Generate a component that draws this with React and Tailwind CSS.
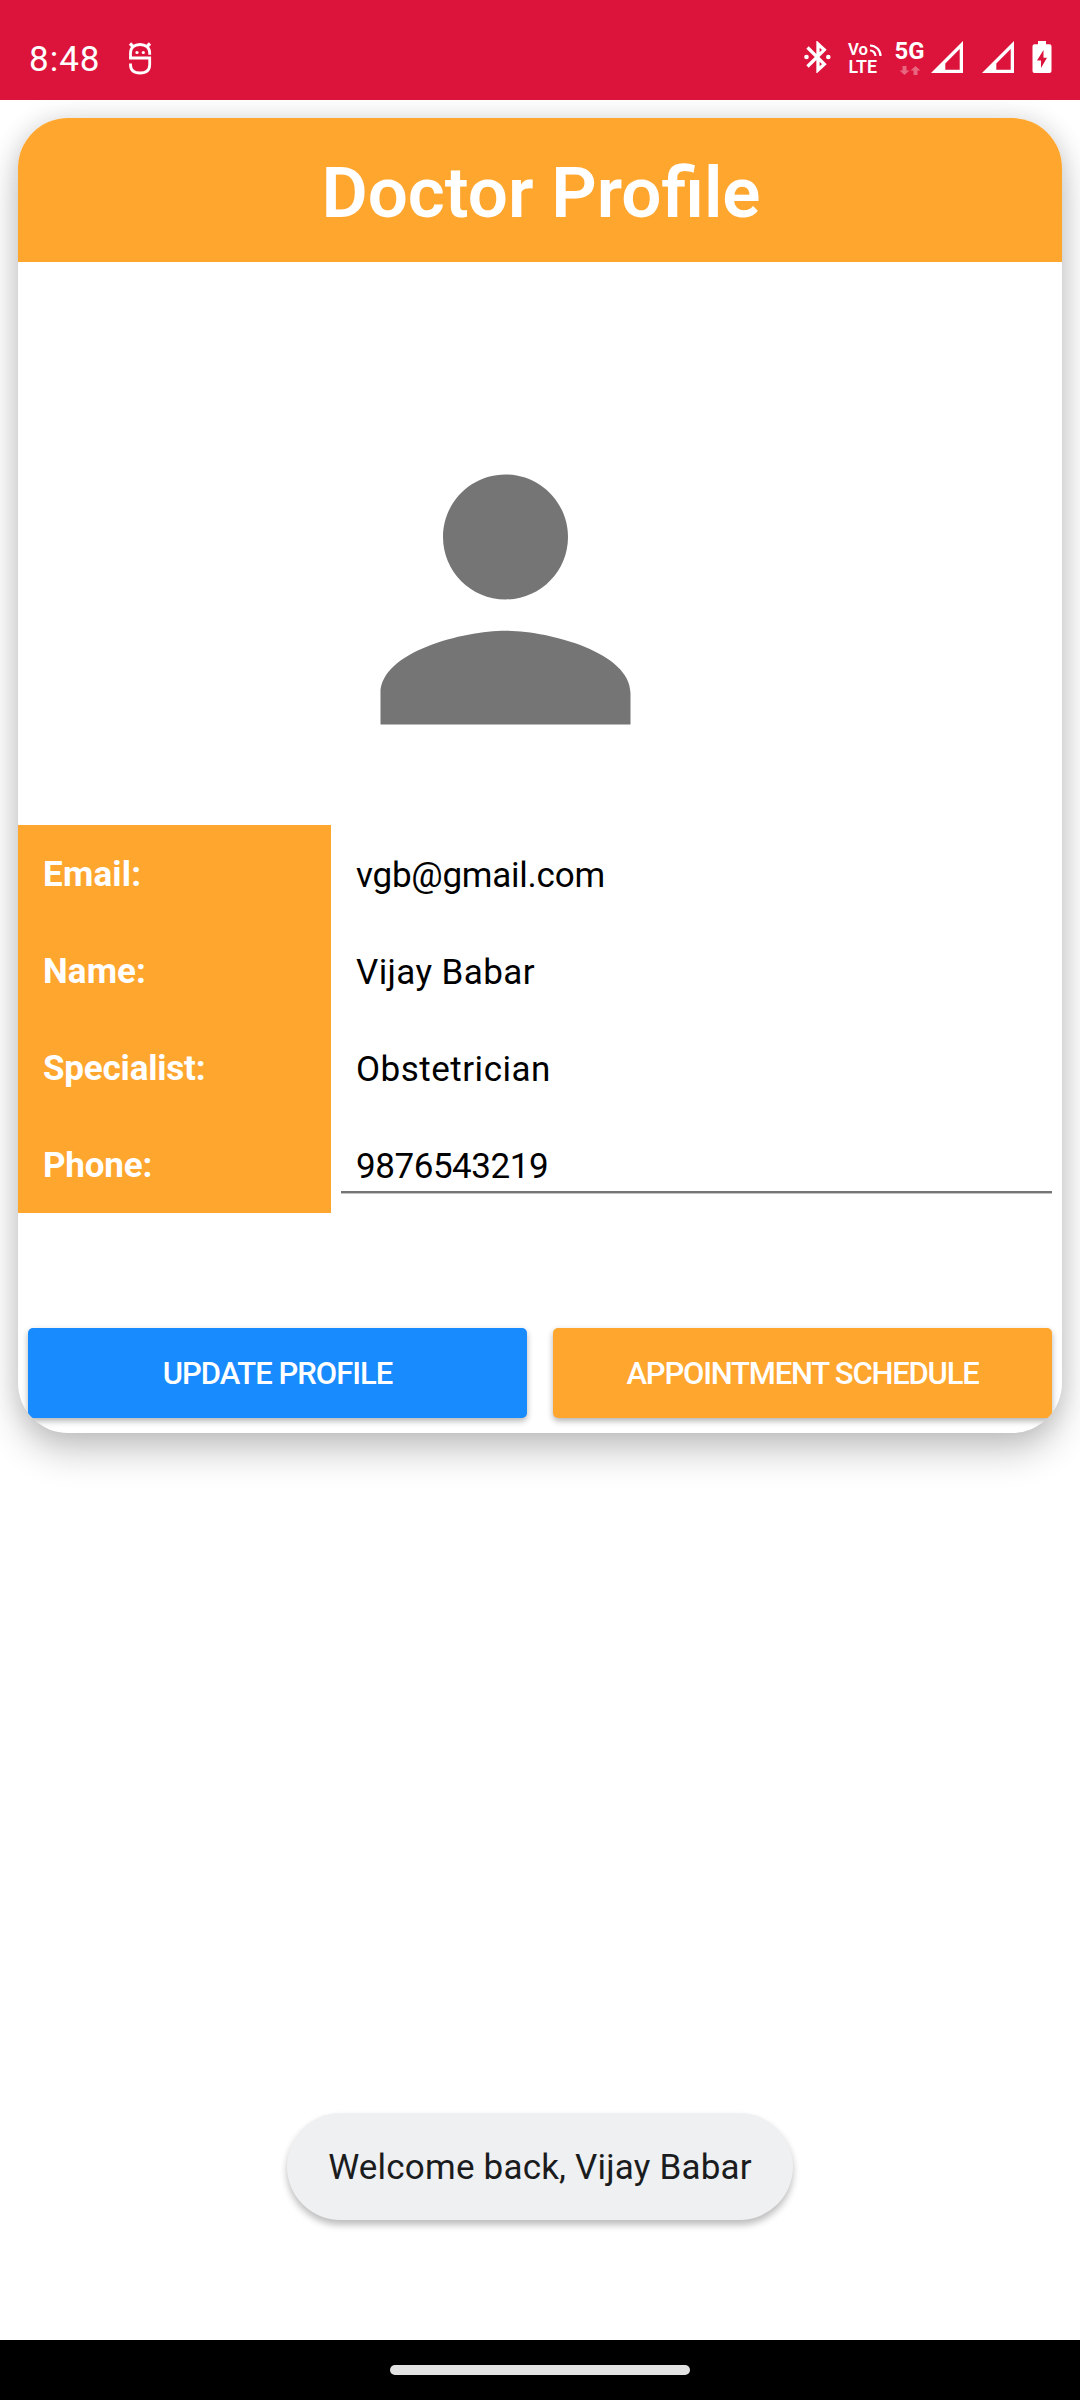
import React from "react";

const fields = [
  { label: "Email:", value: "vgb@gmail.com", labelTrack: "tracking-[0.2px]", track: "tracking-[-0.25px]" },
  { label: "Name:", value: "Vijay Babar", labelTrack: "tracking-[0.1px]", track: "tracking-[0.4px]" },
  { label: "Specialist:", value: "Obstetrician", labelTrack: "tracking-[-0.2px]", track: "tracking-[0.5px]" },
  { label: "Phone:", value: "9876543219", labelTrack: "tracking-[-0.2px]", track: "tracking-[-0.45px]", editable: true },
];

function MaskIcon() {
  return (
    <svg className="h-9 w-6" viewBox="0 0 24 36" fill="none" stroke="#fff" strokeWidth="2.8">
      <path d="M21.700 13.800V12C21.700 6.500 17.500 3.500 12 3.500S2.500 6.500 2.500 12V17H21.700V23.500C21.700 29.500 17.500 32 12 32S2.500 29.500 2.500 23.500V22.500" />
      <path d="M5 5.500L2 2.500M19 5.500L22 2.500" strokeWidth="3.200" />
      <circle cx="9" cy="11.500" r="1.600" fill="#fff" stroke="none" />
      <circle cx="15.300" cy="11.500" r="1.600" fill="#fff" stroke="none" />
    </svg>
  );
}

function BluetoothIcon() {
  return (
    <svg className="h-8 w-7" viewBox="0 0 28 32">
      <path d="M3.500 6.500L20.300 23.200L14 29V3L20.300 8.800L3.500 25.500" fill="none" stroke="#fff" strokeWidth="3.300" />
      <circle cx="2.500" cy="16" r="2.300" fill="#fff" />
      <circle cx="24.300" cy="16" r="2.300" fill="#fff" />
    </svg>
  );
}

function VolteIcon() {
  return (
    <svg className="h-8 w-[36px] overflow-visible" viewBox="0 0 36 32" fill="#fff" fontFamily="Roboto, sans-serif" fontWeight="600">
      <text x="0" y="14" fontSize="16.500" textLength="20" lengthAdjust="spacingAndGlyphs">Vo</text>
      <text x="0.500" y="31.500" fontSize="18" textLength="28.500" lengthAdjust="spacingAndGlyphs">LTE</text>
      <path d="M22 4.500A10.500 10.500 0 0 1 32.500 15M22 9.500A5.500 5.500 0 0 1 27.500 15" fill="none" stroke="#fff" strokeWidth="2.200" />
    </svg>
  );
}

function FiveGIcon() {
  return (
    <svg className="h-[34px] w-[30px] overflow-visible" viewBox="0 0 30 34" fill="#fff">
      <text x="-0.500" y="17.500" fontSize="24" fontFamily="Roboto, sans-serif" fontWeight="700" textLength="30" lengthAdjust="spacingAndGlyphs">5G</text>
      <path d="M7.500 25h4v4.500h3L9.500 34l-5-4.500h3zM18.500 34h4v-4.500h3L20.500 25l-5 4.500h3z" opacity="0.350" />
    </svg>
  );
}

function SignalIcon() {
  return (
    <svg className="h-8 w-8" viewBox="0 0 32 32">
      <path fillRule="evenodd" d="M32 0V32H0ZM28.700 8L14.300 22.400V28.700H28.700Z" fill="#fff" />
    </svg>
  );
}

function BatteryIcon() {
  return (
    <svg className="h-8 w-5" viewBox="0 0 20 32">
      <path fillRule="evenodd" d="M6 0h8v3.300H17.500a2 2 0 0 1 2 2V30a2 2 0 0 1-2 2H2.500a2 2 0 0 1-2-2V5.300a2 2 0 0 1 2-2H6ZM11.500 9L5 19.500H9V27L15 16.800H11.500Z" fill="#fff" />
    </svg>
  );
}

function StatusBar() {
  return (
    <header className="relative z-10 flex h-[100px] shrink-0 items-start justify-between bg-[#dc143c] pr-[28px] pl-[29px] pt-[41px] text-white">
      <div className="flex items-start">
        <span className="-mt-[2px] w-[99px] text-[35px] leading-[41px] tracking-[1px]">8:48</span>
        <MaskIcon />
      </div>
      <div className="flex items-start">
        <div className="mr-4"><BluetoothIcon /></div>
        <div className="mr-[11px]"><VolteIcon /></div>
        <div className="mr-[6px]"><FiveGIcon /></div>
        <div className="mr-[19px]"><SignalIcon /></div>
        <div className="mr-[18px]"><SignalIcon /></div>
        <BatteryIcon />
      </div>
    </header>
  );
}

function ProfileCard() {
  return (
    <section className="mx-[18px] mt-[18px] flex h-[1315px] shrink-0 flex-col overflow-hidden rounded-[50px] bg-white shadow-[0_20px_36px_rgba(0,0,0,0.2),0_0_26px_rgba(0,0,0,0.13)]">
      <h1 className="flex h-36 shrink-0 items-center justify-center bg-[#ffa62f] pt-[6px] pl-[2px] text-[71px] font-semibold text-white">
        Doctor Profile
      </h1>
      <div className="flex h-[563px] shrink-0 items-start pt-[150px] pl-[300px]">
        <svg className="h-[375px] w-[375px]" viewBox="0 0 24 24" fill="#757575">
          <path d="M12 12c2.210 0 4-1.790 4-4s-1.790-4-4-4-4 1.790-4 4 1.790 4 4 4zm0 2c-2.670 0-8 1.340-8 4v2h16v-2c0-2.660-5.330-4-8-4z" />
        </svg>
      </div>
      <dl className="shrink-0 text-[35px]">
        {fields.map((f) => (
          <div key={f.label} className="flex h-[97px]">
            <dt className={`flex w-[313px] items-center bg-[#ffa62f] pt-[4px] pl-[25px] font-bold text-white ${f.labelTrack}`}>
              {f.label}
            </dt>
            <dd className="flex flex-1 flex-col px-[10px] text-black">
              <span className={`flex h-[77px] items-end border-b-2 px-[15px] leading-[41px] ${f.track} ${f.editable ? "border-[#757575] shadow-[0_1px_0_#c4c4c4]" : "border-transparent"}`}>
                <span className="mb-[4px]">{f.value}</span>
              </span>
            </dd>
          </div>
        ))}
      </dl>
      <div className="mt-[115px] flex gap-[26px] px-[10px] text-[31px] font-medium text-white">
        <button className="h-[90px] flex-1 rounded-[5px] bg-[#188bff] pt-[2px] tracking-[-1px] shadow-[0_3px_6px_rgba(0,0,0,0.3)]">
          UPDATE PROFILE
        </button>
        <button className="h-[90px] flex-1 rounded-[5px] bg-[#ffa62f] pt-[2px] tracking-[-1.2px] shadow-[0_3px_6px_rgba(0,0,0,0.3)]">
          APPOINTMENT SCHEDULE
        </button>
      </div>
    </section>
  );
}

export default function App() {
  return (
    <div className="flex h-[2400px] w-[1080px] flex-col overflow-hidden bg-white font-['Roboto',sans-serif]">
      <StatusBar />
      <ProfileCard />
      <main className="flex flex-1 flex-col items-center justify-end pb-[120px]">
        <div className="flex h-[107px] w-[506px] items-center justify-center rounded-full bg-[#eff0f2] pt-[4px] text-[35px] tracking-[0.2px] whitespace-nowrap text-[#1b1c1d] shadow-[0_5px_7px_rgba(0,0,0,0.26)]">
          Welcome back, Vijay Babar
        </div>
      </main>
      <footer className="flex h-[60px] shrink-0 items-start justify-center bg-black pt-[25px]">
        <div className="h-[10px] w-[300px] rounded-full bg-[#e2e2e2]" />
      </footer>
    </div>
  );
}
